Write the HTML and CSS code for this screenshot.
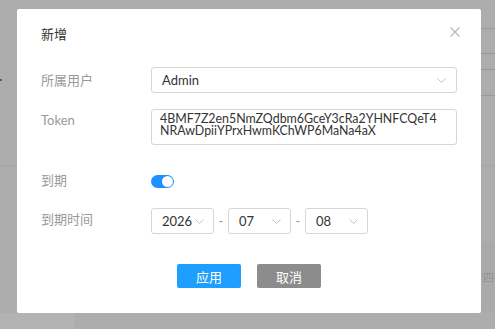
FILE: index.html
```html
<!DOCTYPE html>
<html lang="zh-CN">
<head>
    <meta charset="UTF-8">
    <meta name="viewport" content="width=device-width, initial-scale=1.0">
    <title>新增</title>
    <link rel="stylesheet" href="styles.css">
</head>
<body>
    <div class="page">
        <div class="side">
            <div class="side-top"><span class="dot"></span></div>
            <div class="side-mid"></div>
            <div class="side-foot"></div>
        </div>
        <div class="main">
            <div class="line l1"></div>
            <div class="line l2"></div>
            <div class="line l3"></div>
            <div class="line l4"></div>
            <div class="line l5"></div>
            <div class="block"><span class="week">四</span></div>
        </div>
    </div>

    <div class="modal">
        <div class="modal-head">
            <span class="modal-title">新增</span>
            <svg class="close" width="10" height="10" viewBox="0 0 10 10">
                <path d="M0.5 0.5 L9.5 9.5 M9.5 0.5 L0.5 9.5" stroke="#b5b5b5" stroke-width="1.1" fill="none"/>
            </svg>
        </div>
        <div class="modal-body">
            <div class="form-item item-user">
                <label class="form-label">所属用户</label>
                <div class="select wide">
                    <span>Admin</span>
                    <svg class="arrow" width="9" height="5" viewBox="0 0 9 5"><path d="M0.5 0.5 L4.5 4.5 L8.5 0.5" stroke="#c2c2c2" fill="none"/></svg>
                </div>
            </div>
            <div class="form-item item-token">
                <label class="form-label token-label">Token</label>
                <div class="textarea">4BMF7Z2en5NmZQdbm6GceY3cRa2YHNFCQeT4NRAwDpiiYPrxHwmKChWP6MaNa4aX</div>
            </div>
            <div class="form-item item-expire">
                <label class="form-label">到期</label>
                <div class="switch"><span class="knob"></span></div>
            </div>
            <div class="form-item item-date">
                <label class="form-label">到期时间</label>
                <div class="date-row">
                    <div class="select small">
                        <span>2026</span>
                        <svg class="arrow" width="9" height="5" viewBox="0 0 9 5"><path d="M0.5 0.5 L4.5 4.5 L8.5 0.5" stroke="#c2c2c2" fill="none"/></svg>
                    </div>
                    <span class="dash">-</span>
                    <div class="select small">
                        <span>07</span>
                        <svg class="arrow" width="9" height="5" viewBox="0 0 9 5"><path d="M0.5 0.5 L4.5 4.5 L8.5 0.5" stroke="#c2c2c2" fill="none"/></svg>
                    </div>
                    <span class="dash">-</span>
                    <div class="select small">
                        <span>08</span>
                        <svg class="arrow" width="9" height="5" viewBox="0 0 9 5"><path d="M0.5 0.5 L4.5 4.5 L8.5 0.5" stroke="#c2c2c2" fill="none"/></svg>
                    </div>
                </div>
            </div>
            <div class="btns">
                <button class="btn btn-blue">应用</button>
                <button class="btn btn-gray">取消</button>
            </div>
        </div>
    </div>
</body>
</html>
```
FILE: styles.css
```css
body, html {
    margin: 0;
    padding: 0;
    height: 100%;
    overflow: hidden;
    font-family: Lato, "Noto Sans CJK SC", sans-serif;
}
.page {
    display: flex;
    height: 100%;
    background-color: #adadad;
}
.side {
    width: 74px;
    display: flex;
    flex-direction: column;
}
.side-top {
    height: 165px;
    border-bottom: 1px solid #a4a4a4;
}
.dot {
    display: block;
    width: 2px;
    height: 2px;
    margin-top: 79px;
    background-color: #4a5a80;
}
.side-mid {
    flex: 1;
}
.side-foot {
    height: 16px;
    background-color: #b3b3b3;
}
.main {
    flex: 1;
    display: flex;
    flex-direction: column;
}
.line {
    border-bottom: 1px solid #989898;
}
.l1 { height: 28px; }
.l2 { height: 24px; }
.l3 { height: 15px; }
.l4 { height: 25px; }
.l5 {
    height: 69px;
    border-bottom-color: #a6a6a6;
}
.block {
    margin-top: 76px;
    height: 70px;
    background-color: #aaaaaa;
    display: flex;
    justify-content: flex-end;
    align-items: center;
}
.week {
    font-size: 11px;
    color: #939393;
    width: 12px;
}
.modal {
    position: absolute;
    top: 9px;
    left: 17px;
    width: 464px;
    height: 304px;
    background-color: #fff;
    border-radius: 2px;
}
.modal-head {
    height: 48px;
    padding: 0 21px 0 24px;
    display: flex;
    justify-content: space-between;
    align-items: center;
}
.modal-title {
    font-size: 13px;
    color: #333;
}
.close {
    margin-top: -3px;
}
.modal-body {
    padding: 10px 24px 0 24px;
}
.form-item {
    display: flex;
    align-items: flex-start;
}
.form-label {
    width: 110px;
    flex-shrink: 0;
    font-size: 13px;
    line-height: 26px;
    color: #999;
}
.token-label {
    line-height: 22px;
}
.item-user { margin-bottom: 16px; }
.item-token { margin-bottom: 23px; }
.item-expire { margin-bottom: 15px; }
.item-expire .form-label { line-height: 25px; }
.item-date .form-label { line-height: 23px; }
.select {
    box-sizing: border-box;
    height: 26px;
    border: 1px solid #d6d6d6;
    border-radius: 3px;
    display: flex;
    align-items: center;
    justify-content: space-between;
    font-size: 13px;
    color: #333;
}
.select.wide {
    flex: 1;
    padding: 0 10px 0 10px;
}
.select.small {
    width: 63px;
    padding: 0 9px 0 10px;
}
.textarea {
    flex: 1;
    box-sizing: border-box;
    height: 36px;
    border: 1px solid #d6d6d6;
    border-radius: 3px;
    padding: 3px 12px 0 8px;
    font-size: 12.4px;
    line-height: 12px;
    color: #333;
    word-break: break-all;
}
.switch {
    margin-top: 7px;
    width: 23px;
    height: 13px;
    border-radius: 7px;
    background-color: #1e90ff;
    display: flex;
    justify-content: flex-end;
    align-items: center;
    padding-right: 1px;
    box-sizing: border-box;
}
.knob {
    width: 11px;
    height: 11px;
    border-radius: 50%;
    background-color: #fff;
}
.date-row {
    display: flex;
    align-items: center;
}
.dash {
    width: 14px;
    text-align: center;
    font-size: 13px;
    color: #999;
}
.btns {
    margin-top: 30px;
    display: flex;
    justify-content: center;
    gap: 16px;
}
.btn {
    width: 64px;
    height: 24px;
    border: none;
    border-radius: 2px;
    color: #fff;
    font-family: "Noto Sans CJK SC", sans-serif;
    font-size: 13px;
    padding: 0;
    cursor: pointer;
}
.btn-blue {
    background-color: #1e9fff;
}
.btn-gray {
    background-color: #8c8c8c;
}
```
